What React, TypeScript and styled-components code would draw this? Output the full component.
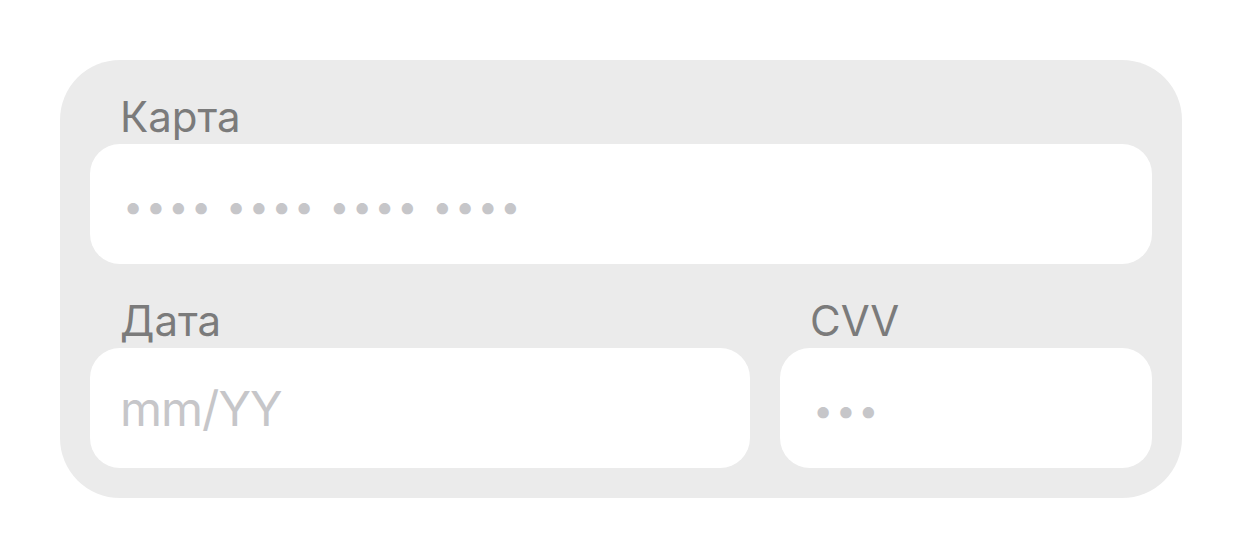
import styled, { createGlobalStyle } from 'styled-components';

const GlobalStyle = createGlobalStyle`
  html, body {
    margin: 0;
    padding: 0;
    background: #ffffff;
  }
  body {
    font-family: Inter, "Noto Sans", sans-serif;
  }
  * {
    box-sizing: border-box;
  }
`;

const App = (): React.ReactElement => {
  return (
    <>
      <GlobalStyle />
      <PageLayout>
        <CardForm>
          <Field>
            <FieldLabel htmlFor="card-number">Карта</FieldLabel>
            <FieldInput
              id="card-number"
              type="text"
              inputMode="numeric"
              placeholder="•••• •••• •••• ••••"
              $masked
            />
          </Field>
          <FieldRow>
            <Field>
              <FieldLabel htmlFor="card-date">Дата</FieldLabel>
              <FieldInput id="card-date" type="text" placeholder="mm/YY" />
            </Field>
            <Field>
              <FieldLabel htmlFor="card-cvv">CVV</FieldLabel>
              <FieldInput
                id="card-cvv"
                type="text"
                inputMode="numeric"
                placeholder="•••"
                $masked
              />
            </Field>
          </FieldRow>
        </CardForm>
      </PageLayout>
    </>
  );
};

export default App;

const PageLayout = styled.main`
  padding: 60px;
  width: 1242px;
  height: 558px;
`;

const CardForm = styled.form`
  display: flex;
  flex-direction: column;
  gap: 30px;
  padding: 30px;
  border-radius: 60px;
  background-color: #ebebeb;
`;

const FieldRow = styled.div`
  display: grid;
  grid-template-columns: 660px 1fr;
  gap: 30px;
`;

const Field = styled.div`
  display: flex;
  flex-direction: column;
`;

const FieldLabel = styled.label`
  padding-left: 30px;
  font-size: 42px;
  line-height: 54px;
  color: #7b7b7b;
`;

const FieldInput = styled.input<{ $masked?: boolean }>`
  width: 100%;
  height: 120px;
  padding: ${({ $masked }) => ($masked ? '4px 30px 0 33px' : '0 30px')};
  border: 0;
  outline: none;
  border-radius: 30px;
  background-color: #ffffff;
  font-family: Inter, "Noto Sans", sans-serif;
  font-size: ${({ $masked }) => ($masked ? '36px' : '48px')};
  color: #333333;
  letter-spacing: ${({ $masked }) => ($masked ? '2.4px' : '-1px')};

  &::placeholder {
    color: #c6c6c9;
    opacity: 1;
  }
`;
